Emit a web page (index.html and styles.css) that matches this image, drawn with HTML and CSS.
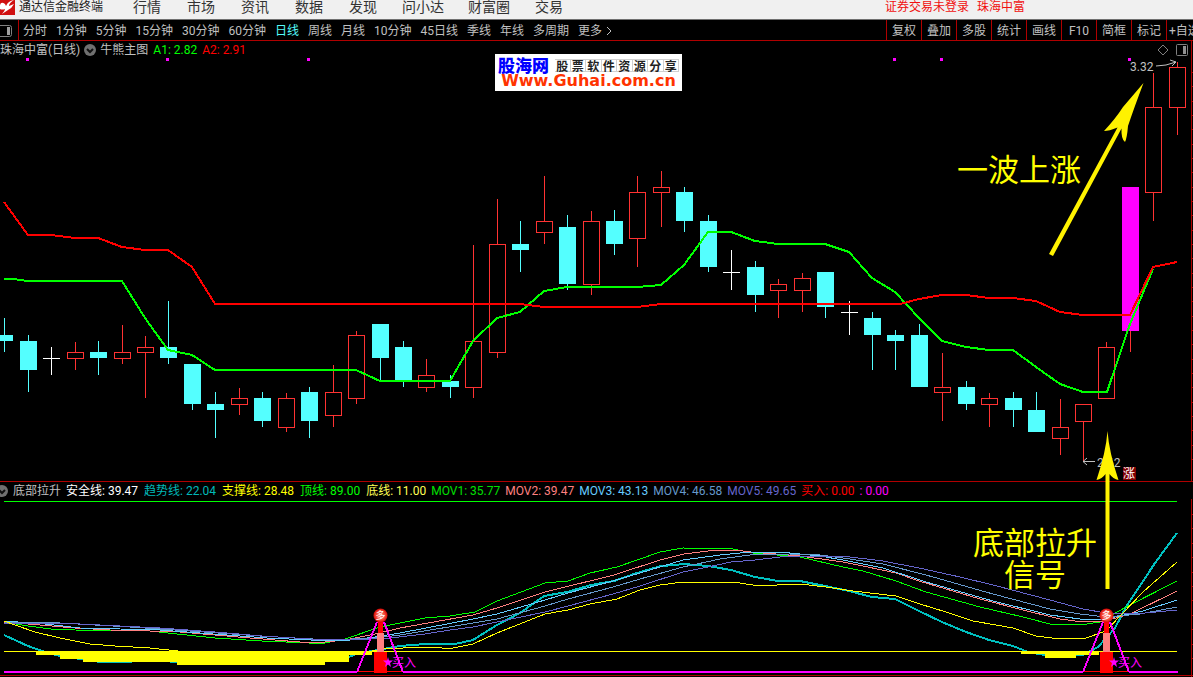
FILE: index.html
```html
<!DOCTYPE html>
<html lang="zh-CN">
<head>
<meta charset="utf-8">
<meta name="viewport" content="width=device-width, initial-scale=1">
<title>通达信金融终端</title>
<link rel="stylesheet" href="styles.css">
</head>
<body>
<header class="titlebar">
  <svg class="logo" viewBox="0 0 15 15" aria-hidden="true">
    <rect width="15" height="15" fill="#d01010"/>
    <path d="M0 5Q1 1 5 4L6 6Q8 1 14 0Q9 3 9 6L14 4Q12 8 8 10L2 14Q5 11 5 9Q2 10 0 9Z" fill="#fff"/>
  </svg>
  <h1 class="brand">通达信金融终端</h1>
  <nav class="menu" aria-label="主菜单">
    <a href="#quotes">行情</a><a href="#market">市场</a><a href="#news">资讯</a><a href="#data">数据</a><a href="#discover">发现</a><a href="#ask" class="wide">问小达</a><a href="#club" class="wide">财富圈</a><a href="#trade">交易</a>
  </nav>
  <div class="account"><a href="#login">证券交易未登录</a><a href="#stock">珠海中富</a></div>
</header>

<div class="toolbar">
  <button class="pane-toggle" type="button" aria-label="侧栏">
    <svg viewBox="0 0 13 12" width="13" height="12"><rect x="-2" y=".5" width="13.500" height="11" rx="2" fill="none" stroke="#808080"/><rect x="7" y="2" width="3" height="8" fill="#a0a0a0"/></svg>
  </button>
  <div class="periods">
    <button type="button">分时</button><button type="button">1分钟</button><button type="button">5分钟</button><button type="button">15分钟</button><button type="button">30分钟</button><button type="button">60分钟</button><button type="button" class="active" aria-pressed="true">日线</button><button type="button">周线</button><button type="button">月线</button><button type="button">10分钟</button><button type="button">45日线</button><button type="button">季线</button><button type="button">年线</button><button type="button">多周期</button><button type="button" class="more">更多<svg viewBox="0 0 6 10" width="6" height="10"><path d="M1 1L5 5L1 9" fill="none" stroke="#c0c0c0"/></svg></button>
  </div>
  <div class="tools">
    <button type="button">复权</button><button type="button">叠加</button><button type="button">多股</button><button type="button">统计</button><button type="button">画线</button><button type="button">F10</button><button type="button">简框</button><button type="button">标记</button><button type="button" class="add">+自选</button>
  </div>
</div>

<main class="workspace">
  <section class="price" aria-label="主图">
    <div class="legend">
      <span>珠海中富(日线)</span>
      <button type="button" class="fold" aria-label="指标菜单"><svg viewBox="0 0 12 12" width="12" height="12"><circle cx="6" cy="6" r="6" fill="#707070"/><path d="M3 5L6 8L9 5" fill="none" stroke="#111" stroke-width="2"/></svg></button>
      <span>牛熊主图</span>
      <span class="lime">A1: 2.82</span>
      <span class="red">A2: 2.91</span>
      <div class="pane-icons">
        <button type="button" aria-label="标记"><svg viewBox="0 0 12 12" width="12" height="12"><path d="M6 1L11 6L6 11L1 6Z" fill="none" stroke="#808080"/></svg></button>
        <button type="button" aria-label="分栏"><svg viewBox="0 0 12 12" width="12" height="12"><rect x=".5" y=".5" width="11" height="11" rx="1" fill="none" stroke="#808080"/><rect x="7" y="2" width="3" height="8" fill="#909090"/></svg></button>
      </div>
    </div>
    <svg id="price-chart" class="chart" viewBox="0 58 1193 423" role="img" aria-label="珠海中富日线"></svg>
    <aside class="watermark">
      <div class="wm-top"><b>股海网</b><span class="wm-grid"><i>股</i><i>票</i><i>软</i><i>件</i><i>资</i><i>源</i><i>分</i><i>享</i></span></div>
      <div class="wm-url">Www.Guhai.com.cn</div>
    </aside>
  </section>

  <section class="indicator" aria-label="底部拉升">
    <div class="legend">
      <button type="button" class="fold" aria-label="指标菜单"><svg viewBox="0 0 12 12" width="12" height="12"><circle cx="6" cy="6" r="6" fill="#707070"/><path d="M3 5L6 8L9 5" fill="none" stroke="#111" stroke-width="2"/></svg></button>
      <span>底部拉升</span>
      <div class="levels">
        <span class="white">安全线: 39.47</span>
        <span class="teal">趋势线: 22.04</span>
        <span class="yellow">支撑线: 28.48</span>
        <span class="lime">顶线: 89.00</span>
        <span class="yellow-pale">底线: 11.00</span>
      </div>
      <span class="lime-dim">MOV1: 35.77</span>
      <span class="salmon">MOV2: 39.47</span>
      <span class="sky">MOV3: 43.13</span>
      <span class="steel">MOV4: 46.58</span>
      <span class="violet">MOV5: 49.65</span>
      <span class="red">买入: 0.00</span>
      <span class="magenta">: 0.00</span>
    </div>
    <svg id="indicator-chart" class="chart" viewBox="0 499 1193 178" role="img" aria-label="底部拉升指标"></svg>
  </section>

  <svg class="notes" viewBox="0 41 1193 636">
    <g fill="#fff200">
      <path d="M1143.5 83Q1134 108 1128 126Q1127 138 1125 142Q1121 139 1121.500 128.500L1053 256L1049 254L1117.500 127.500Q1109 131 1104 131Q1116 118 1123 107Z"/>
      <path d="M1107.500 431Q1109 452 1118.500 480Q1113 479 1109.500 474L1109.500 589L1105.500 589L1105.500 474Q1102 479 1096.500 480Q1106 452 1107.500 431Z"/>
    </g>
    <g class="note-text">
      <text x="957" y="181">一波上涨</text>
      <text x="973" y="554">底部拉升</text>
      <text x="1004" y="586">信号</text>
    </g>
  </svg>
</main>
<script src="chart.js"></script>
</body>
</html>
```

FILE: styles.css
```css
* { box-sizing: border-box; }

body {
  margin: 0;
  background: #000;
  color: #c0c0c0;
  font: 12px/16px Roboto, "Noto Sans CJK SC", sans-serif;
  overflow-x: hidden;
}

a { color: inherit; text-decoration: none; }

button {
  margin: 0;
  padding: 0;
  border: 0;
  background: none;
  color: inherit;
  font: inherit;
  white-space: nowrap;
  cursor: pointer;
}

svg { display: block; flex: none; }

.titlebar {
  display: flex;
  align-items: flex-start;
  height: 20px;
  background: #f0f0f0;
  border-bottom: 1px solid #707070;
  line-height: 15px;
  white-space: nowrap;
  overflow: hidden;
}

.logo { width: 15px; height: 15px; }

.brand {
  margin: 0 0 0 4px;
  font-size: 12px;
  font-weight: 400;
  color: #222;
}

.menu {
  display: flex;
  gap: 26px;
  margin-left: 30px;
  font-size: 14px;
  color: #333;
}

.menu .wide { margin: 0 -1px; }

.account {
  display: flex;
  gap: 8px;
  margin-left: auto;
  padding-right: 168px;
  color: #f01010;
}

.toolbar {
  display: flex;
  height: 21px;
  border-bottom: 1px solid #b00000;
  overflow: hidden;
}

.toolbar button { padding-top: 1px; }

.pane-toggle {
  flex: none;
  width: 19px;
  border-right: 1px solid #b00000;
}

.periods {
  display: flex;
  gap: 9px;
  padding-left: 4px;
}

.periods .active { color: #54fcfc; }

.more { display: flex; align-items: center; gap: 4px; }

.tools { display: flex; flex: none; margin-left: auto; }

.tools button {
  width: 35px;
  border-left: 1px solid #b00000;
}

.tools .add {
  width: 27px;
  padding-left: 2px;
  overflow: hidden;
  text-align: left;
}

.workspace, .price { position: relative; }

.indicator { border-top: 1px solid #b00000; }

.legend, .levels {
  display: flex;
  align-items: center;
  white-space: nowrap;
}

.legend { gap: 5px; height: 17px; }
.levels { gap: 6px; }

.price .legend { padding-right: 5px; }
.price .legend .fold { margin: 0 -1px; }

.indicator .legend .fold {
  width: 8px;
  display: flex;
  justify-content: flex-end;
}

.pane-icons { display: flex; gap: 7px; margin-left: auto; }

.white { color: #fff; }
.lime { color: #00ff00; }
.lime-dim { color: #00e000; }
.red { color: #ff0000; }
.teal { color: #00b8b8; }
.yellow { color: #ffff00; }
.yellow-pale { color: #ffff54; }
.salmon { color: #ff8080; }
.sky { color: #66ccff; }
.steel { color: #6699cc; }
.violet { color: #6666cc; }
.magenta { color: #ff00ff; }

.chart { width: 100%; height: auto; overflow: visible; }

.crisp { shape-rendering: crispEdges; }

.tag { font: 12px Roboto, "Noto Sans CJK SC", sans-serif; fill: #c0c0c0; }
.tag-buy { fill: #ff00ff; }
.tag-white { fill: #fff; }
.tag-ball { fill: #fff; font-size: 10px; }

.notes {
  position: absolute;
  top: 0;
  left: 0;
  width: 100%;
  height: auto;
  pointer-events: none;
}

.note-text {
  font: 31px "Noto Sans CJK SC", sans-serif;
  fill: #ffff00;
}

.watermark {
  position: absolute;
  top: 13px;
  left: 495px;
  width: 187px;
  height: 37px;
  padding: 3px;
  background: #fff;
}

.wm-top { display: flex; align-items: center; gap: 6px; height: 16px; }

.wm-top b {
  font: 900 17px/16px "Noto Sans CJK SC", sans-serif;
  color: #0000ff;
}

.wm-grid { display: flex; flex: 1; }

.wm-grid i {
  flex: 1;
  height: 13px;
  border: 1px solid #d0d0d0;
  border-left-width: 0;
  font: normal 700 12px/11px "Noto Sans CJK SC", sans-serif;
  color: #222;
  text-align: center;
}

.wm-url {
  font: 700 16px/16px "DejaVu Sans", sans-serif;
  color: #ff3300;
  text-align: center;
}
```

FILE: chart.js
```javascript
const NS = "http://www.w3.org/2000/svg";

function add(parent, name, attrs, text) {
  const el = document.createElementNS(NS, name);
  for (const key in attrs) el.setAttribute(key, attrs[key]);
  if (text) el.textContent = text;
  parent.appendChild(el);
  return el;
}

function rect(parent, x, y, width, height, fill) {
  add(parent, "rect", { x, y, width, height, fill });
}

function line(parent, points, stroke, width = 1) {
  add(parent, "polyline", { points, fill: "none", stroke, "stroke-width": width });
}

const COLORS = { u: "#ff3232", d: "#54ffff", w: "#ffffff", m: "#ff00ff" };

// x centre, high, body top, body bottom, low, kind (up / down / flat / marked)
const candles = [
  [4,318,335,341,352,"d"],[28,335,341,370,392,"d"],[51,347,358,359,375,"w"],[75,342,352,359,370,"u"],
  [98,341,352,358,375,"d"],[122,325,352,359,364,"u"],[145,336,347,353,398,"u"],[168,301,347,358,364,"d"],
  [192,364,364,404,410,"d"],[215,392,404,410,438,"d"],[239,388,398,405,415,"u"],[262,392,398,421,427,"d"],
  [286,393,398,428,432,"u"],[309,387,392,421,438,"d"],[333,365,392,416,427,"u"],[356,331,335,399,404,"u"],
  [380,324,324,358,380,"d"],[403,341,347,380,387,"d"],[426,359,375,388,392,"u"],[450,375,381,387,398,"d"],
  [473,245,341,388,398,"u"],[497,199,244,353,358,"u"],[520,221,244,250,272,"d"],[544,176,221,233,244,"u"],
  [567,215,227,284,290,"d"],[591,211,221,285,295,"u"],[614,210,221,244,255,"d"],[637,176,192,239,267,"u"],
  [661,171,187,193,227,"u"],[684,187,192,221,232,"d"],[708,215,221,267,272,"d"],[731,250,272,273,290,"w"],
  [755,261,267,295,312,"d"],[778,279,284,291,318,"u"],[802,273,278,291,312,"u"],[825,272,272,307,318,"d"],
  [849,301,312,313,335,"w"],[872,312,318,335,370,"d"],[895,330,335,341,370,"d"],[919,324,335,387,387,"d"],
  [942,353,387,393,421,"u"],[966,381,387,404,410,"d"],[989,393,398,405,427,"u"],[1013,392,398,410,427,"d"],
  [1036,392,410,432,432,"d"],[1060,399,427,439,455,"u"],[1083,404,404,422,462,"u"],[1106,342,347,399,399,"u"],
  [1130,187,187,331,352,"m"],[1153,73,107,193,221,"u"],[1177,62,67,108,135,"u"]
];

const price = document.getElementById("price-chart");
const body = add(price, "g", { class: "crisp" });

for (const [x, high, top, bottom, low, kind] of candles) {
  const color = COLORS[kind];
  const wick = kind === "m" ? COLORS.u : color;
  rect(body, x, high, 1, top - high, wick);
  rect(body, x, bottom, 1, low - bottom, wick);
  if (kind === "u") {
    add(body, "rect", { x: x - 7.5, y: top + 0.5, width: 16, height: bottom - top - 1, fill: "none", stroke: color });
  } else {
    rect(body, x - 8, top, 17, bottom - top, color);
  }
}

line(body, "4,279 13,279 28,281 122,281 145,318 168,350 192,355 215,370 356,370 380,381 450,381 473,341 497,318 520,312 544,291 567,287 637,287 661,285 684,265 708,232 731,232 755,241 778,244 825,244 849,252 872,278 895,292 919,318 942,341 966,347 989,350 1013,350 1036,367 1060,384 1083,392 1107,392 1130,324 1153,269", "#00ff00", 2);
line(body, "4,202 28,235 51,235 75,238 98,238 122,247 145,250 168,250 192,267 215,304 520,304 544,307 637,307 661,304 900,304 919,299 942,295 966,295 989,298 1013,298 1036,301 1060,312 1083,315 1130,315 1153,267 1177,262", "#ff0000", 2);

for (const x of [26, 166, 307, 893, 940, 1128]) rect(body, x, 58, 3, 3, "#ff00ff");

line(body, "1191.5,41 1191.5,481", "#b00000");
for (let y = 72; y < 460; y += 14.33) rect(body, 1192, Math.round(y), 1, 1, "#b00000");

line(price, "1156,66 1166,65 1176,62", "#c0c0c0");
line(price, "1170,60 1176,62 1172,66", "#c0c0c0");
add(price, "text", { x: 1130, y: 71, class: "tag" }, "3.32");
line(price, "1095,461.5 1083,461.5", "#c0c0c0");
line(price, "1087,458 1083,461.5 1087,465", "#c0c0c0");
add(price, "text", { x: 1097, y: 467, class: "tag" }, "2.62");
rect(price, 1123, 467, 13, 13, "#800000");
add(price, "text", { x: 1123, y: 478, class: "tag tag-white" }, "涨");

const lower = document.getElementById("indicator-chart");
const plot = add(lower, "g", { class: "crisp" });

line(plot, "4,501.5 1177,501.5", "#00ff00");
line(plot, "4,635 28,646 42,651 60,656 100,662 165,661 192,664 270,664 325,661 349,657 356,654 372,651 400,646 425,644 455,644 473,640 497,625 520,613 544,596 567,592 591,585 614,581 637,573 661,566 675,565 684,564 708,566 731,570 755,577 778,581 800,581 825,586 849,591 872,597 895,599 919,611 942,622 966,632 989,640 1013,646 1028,652 1045,655 1083,655 1098,647 1115,628 1126,607 1155,563 1177,533", "#00c0c0", 2);
line(plot, "4,622 28,626 51,629 75,630 150,631 168,633 215,638 262,641 309,643 325,643 345,639 380,627 400,623 425,618 450,616 475,612 497,601 545,583 568,581 590,573 617,567 660,552 683,548 733,549 753,553 777,555 800,557 843,567 863,571 896,581 926,592 980,607 1023,617 1050,624 1080,625 1100,622 1126,607 1177,581", "#00ff00");
line(plot, "4,622 40,625 75,628 110,630 150,631 180,632 250,638 300,642 325,642 345,640 375,634 400,628 473,615 497,608 545,592 614,575 660,560 684,554 708,551 735,550 750,552 776,554 800,556 843,562 863,566 896,573 919,581 980,599 1023,610 1060,619 1083,622 1105,621 1130,614 1177,591", "#ff8080");
line(plot, "4,621 45,624 80,628 160,630 200,633 267,638 333,641 350,640 375,637 400,633 473,619 497,614 545,600 568,593 613,581 640,573 683,560 720,555 750,552 790,553 820,556 843,560 883,568 926,582 993,601 1050,615 1080,619 1106,619 1143,611 1177,600", "#66ccff");
line(plot, "4,622 60,623 130,627 190,631 260,636 330,640 375,638 400,635 473,623 497,619 545,606 568,599 613,587 640,579 683,567 720,559 750,555 790,554 820,555 843,558 883,564 926,575 993,594 1050,609 1080,614 1106,617 1140,614 1177,607", "#6699cc");
line(plot, "4,623 60,623 100,625 160,628 215,632 262,636 310,639 350,640 390,638 425,634 450,630 473,627 497,622 545,612 568,606 613,594 640,586 683,572 708,567 731,562 755,560 780,557 800,556 825,556 850,557 883,561 919,568 960,577 993,585 1050,600 1083,609 1106,613 1135,614 1177,610", "#6666cc");
line(plot, "4,621 15,625 35,632 60,638 90,644 115,646 150,648 178,651 372,651 384,649 423,647 438,647 442,648 453,648 473,644 497,633 545,614 568,610 590,604 617,599 640,590 660,585 683,582 733,582 753,585 777,585 800,584 826,587 853,591 896,596 920,604 946,612 973,621 1013,628 1036,636 1060,639 1086,638 1106,631 1121,615 1143,592 1177,562", "#ffff00");

line(plot, "4,651.5 1177,651.5", "#ffff00");
add(plot, "path", { d: "M36 651V655H60V659H83V662H177V665H325V662H349V655H372V651Z", fill: "#ffff00" });
add(plot, "path", { d: "M1021 652V654H1045V658H1076V655H1099V652Z", fill: "#ffff00" });

line(plot, "4,672 357,672", "#ff00ff", 2);
line(plot, "403,672 1083,672", "#ff00ff", 2);
line(plot, "1129,672 1178,672", "#ff00ff", 2);
line(plot, "0,675.5 1193,675.5", "#b00000");
line(plot, "1191.5,499 1191.5,677", "#b00000");
for (let y = 514; y < 670; y += 14.4) rect(plot, 1192, Math.round(y), 1, 1, "#b00000");

const defs = add(lower, "defs", {});
const ball = add(defs, "radialGradient", { id: "ball" });
add(ball, "stop", { offset: "0", "stop-color": "#ff9080" });
add(ball, "stop", { offset: "0.7", "stop-color": "#f04030" });
add(ball, "stop", { offset: "1", "stop-color": "#d00000" });

for (const x of [380, 1106]) {
  line(plot, `${x - 23},671.5 ${x + 23},671.5`, "#ff0000");
  rect(plot, x - 6, 652, 13, 21, "#ff0000");
  rect(plot, x - 3, 633, 7, 19, "#ff8080");
  rect(plot, x - 2, 621, 5, 12, "#ff0000");
  line(plot, `${x - 3},622 ${x - 23},672`, "#ff00ff", 2);
  line(plot, `${x + 4},622 ${x + 23},672`, "#ff00ff", 2);
  add(lower, "circle", { cx: x + 0.5, cy: 615.5, r: 7, fill: "url(#ball)" });
  add(lower, "text", { x: x + 0.5, y: 619, class: "tag tag-ball", "text-anchor": "middle" }, "多");
  add(lower, "path", { transform: `translate(${x + 8} 662)`, d: "M0 -5L1 -1.500L5 -1.500L2 1L3 5L0 2.500L-3 5L-2 1L-5 -1.500L-1 -1.500Z", fill: "#ff00ff" });
  add(lower, "text", { x: x + 12, y: 667, class: "tag tag-buy" }, "买入");
}
```
